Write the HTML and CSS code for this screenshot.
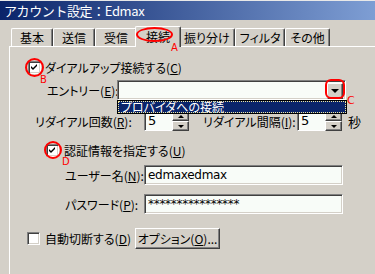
FILE: index.html
```html
<!DOCTYPE html>
<html lang="ja">
<head>
    <meta charset="UTF-8">
    <title>アカウント設定</title>
    <link rel="stylesheet" href="styles.css">
</head>
<body>
    <div class="window">
        <div class="titlebar">アカウント設定：Edmax</div>

        <div class="tabs">
            <div class="tab">基本</div>
            <div class="tab">送信</div>
            <div class="tab">受信</div>
            <div class="tab active">接続</div>
            <div class="tab">振り分け</div>
            <div class="tab">フィルタ</div>
            <div class="tab">その他</div>
        </div>

        <div class="panel">
            <div class="row row-dialup">
                <span class="check"><svg width="7" height="7" viewBox="0 0 7 7"><path d="M0 2 L2 4 L6 0 L6 2 L2 6 L0 4 Z" fill="#000"/></svg></span>
                <span class="label">ダイアルアップ接続する(<u>C</u>)</span>
            </div>

            <div class="row row-entry">
                <span class="label">エントリー(<u>E</u>):</span>
                <div class="combo">
                    <div class="combo-btn"><span class="arrow-down"></span></div>
                </div>
            </div>

            <div class="row row-redial">
                <span class="label label-count">リダイアル回数(<u>R</u>):</span>
                <div class="spin">
                    <div class="spin-input">5</div>
                    <div class="spin-btns">
                        <div class="spin-btn"><span class="arrow-up"></span></div>
                        <div class="spin-btn"><span class="arrow-down small"></span></div>
                    </div>
                </div>
                <span class="label label-interval">リダイアル間隔(<u>I</u>):</span>
                <div class="spin">
                    <div class="spin-input">5</div>
                    <div class="spin-btns">
                        <div class="spin-btn"><span class="arrow-up"></span></div>
                        <div class="spin-btn"><span class="arrow-down small"></span></div>
                    </div>
                </div>
                <span class="label label-sec">秒</span>
            </div>

            <div class="row row-auth">
                <span class="check"><svg width="7" height="7" viewBox="0 0 7 7"><path d="M0 2 L2 4 L6 0 L6 2 L2 6 L0 4 Z" fill="#000"/></svg></span>
                <span class="label">認証情報を指定する(<u>U</u>)</span>
            </div>

            <div class="row row-field">
                <span class="label field-label">ユーザー名(<u>N</u>):</span>
                <div class="textbox">edmaxedmax</div>
            </div>

            <div class="row row-field row-pass">
                <span class="label field-label">パスワード(<u>P</u>):</span>
                <div class="textbox">****************</div>
            </div>

            <div class="row row-auto">
                <span class="check"></span>
                <span class="label">自動切断する(<u>D</u>)</span>
                <div class="button">オプション(<u>O</u>)...</div>
            </div>

            <!-- open dropdown list of the entry combo -->
            <div class="droplist">
                <div class="drop-item">プロバイダへの接続</div>
            </div>
        </div>

        <!-- red annotations -->
        <div class="mark mark-tab"></div>
        <div class="mark-letter letter-a">A</div>
        <div class="mark mark-b"></div>
        <div class="mark-letter letter-b">B</div>
        <div class="mark mark-c"></div>
        <div class="mark-letter letter-c">C</div>
        <div class="mark mark-d"></div>
        <div class="mark-letter letter-d">D</div>
    </div>
</body>
</html>
```

FILE: styles.css
```css
body {
    margin: 0;
    background-color: #d4d0c8;
    font-family: "Noto Sans CJK JP", "DejaVu Sans", sans-serif;
    font-size: 12px;
    font-feature-settings: "palt";
    color: #000;
}

.window {
    position: relative;
    width: 375px;
    height: 274px;
    overflow: hidden;
}

.titlebar {
    height: 20px;
    line-height: 19px;
    padding-left: 4px;
    color: #fff;
    font-size: 13px;
    font-feature-settings: normal;
    letter-spacing: -0.4px;
    background: linear-gradient(to right, #0a246a, #7e9ed4);
    border-top: 1px solid #e8e8e8;
    box-sizing: border-box;
}

/* tabs */
.tabs {
    display: flex;
    align-items: flex-end;
    height: 20px;
    margin-top: 6px;
    padding-left: 11px;
    position: relative;
    z-index: 2;
}

.tab {
    min-width: 42px;
    height: 18px;
    line-height: 17px;
    padding: 0 4px;
    text-align: center;
    border-top: 1px solid #fff;
    border-left: 1px solid #fff;
    border-right: 1px solid #404040;
    border-radius: 2px 2px 0 0;
    box-shadow: inset -1px 0 0 #808080;
    background-color: #d4d0c8;
    box-sizing: border-box;
}

.tab.active {
    min-width: 46px;
    height: 21px;
    line-height: 20px;
    margin: 0 -2px -1px -2px;
    padding: 0 6px;
    position: relative;
    z-index: 3;
}

.panel {
    position: relative;
    margin-left: 9px;
    height: 228px;
    border-top: 1px solid #fff;
    border-left: 1px solid #fff;
    display: flex;
    flex-direction: column;
}

.row {
    display: flex;
    align-items: center;
}

.label {
    flex: none;
    white-space: nowrap;
}

/* checkbox */
.check {
    width: 13px;
    height: 13px;
    box-sizing: border-box;
    border-top: 1px solid #808080;
    border-left: 1px solid #808080;
    border-right: 1px solid #fff;
    border-bottom: 1px solid #fff;
    box-shadow: inset 1px 1px 0 #404040, inset -1px -1px 0 #d4d0c8;
    background-color: #fff;
    display: flex;
    align-items: center;
    justify-content: center;
    margin-right: 4px;
    flex: none;
}

.row-dialup {
    margin-top: 14px;
    padding-left: 18px;
    height: 13px;
}

.row-entry {
    margin-top: 6px;
    padding-left: 37px;
    height: 20px;
}

.row-entry .label {
    width: 70px;
}

.combo {
    width: 229px;
    height: 20px;
    box-sizing: border-box;
    border-top: 1px solid #808080;
    border-left: 1px solid #808080;
    border-right: 1px solid #fff;
    border-bottom: 1px solid #fff;
    box-shadow: inset 1px 1px 0 #404040, inset -1px -1px 0 #d4d0c8;
    background-color: #f8fcf8;
    display: flex;
    justify-content: flex-end;
    padding: 2px;
}

.combo-btn,
.spin-btn,
.button {
    background-color: #d4d0c8;
    border-top: 1px solid #fff;
    border-left: 1px solid #fff;
    border-right: 1px solid #404040;
    border-bottom: 1px solid #404040;
    box-shadow: inset -1px -1px 0 #808080;
    box-sizing: border-box;
    display: flex;
    align-items: center;
    justify-content: center;
}

.combo-btn {
    width: 16px;
    height: 16px;
}

.arrow-down {
    width: 0;
    height: 0;
    border-left: 4px solid transparent;
    border-right: 4px solid transparent;
    border-top: 4px solid #000;
}

.arrow-up {
    width: 0;
    height: 0;
    border-left: 3px solid transparent;
    border-right: 3px solid transparent;
    border-bottom: 3px solid #000;
}

.arrow-down.small {
    border-left-width: 3px;
    border-right-width: 3px;
    border-top-width: 3px;
}

.row-redial {
    margin-top: 11px;
    padding-left: 25px;
    height: 20px;
}

.label-count {
    width: 109px;
}

.spin {
    display: flex;
    height: 20px;
    flex: none;
}

.spin-input {
    width: 28px;
    height: 20px;
    box-sizing: border-box;
    border-top: 1px solid #808080;
    border-left: 1px solid #808080;
    border-bottom: 1px solid #fff;
    box-shadow: inset 1px 1px 0 #404040;
    background-color: #f8fcf8;
    padding-left: 3px;
    line-height: 17px;
    font-family: "DejaVu Sans", sans-serif;
    font-size: 13px;
}

.spin-btns {
    display: flex;
    flex-direction: column;
    width: 17px;
}

.spin-btn {
    height: 10px;
}

.label-interval {
    width: 94px;
    margin-left: 14px;
}

.label-sec {
    margin-left: 6px;
    font-size: 13px;
}

.row-auth {
    margin-top: 13px;
    padding-left: 36px;
    height: 13px;
}

.row-auth .check {
    margin-right: 5px;
}

.row-field {
    margin-top: 8px;
    padding-left: 55px;
    height: 20px;
}

.row-pass {
    margin-top: 9px;
}

.field-label {
    width: 79px;
}

.textbox {
    width: 199px;
    height: 20px;
    box-sizing: border-box;
    border-top: 1px solid #808080;
    border-left: 1px solid #808080;
    border-right: 1px solid #fff;
    border-bottom: 1px solid #fff;
    box-shadow: inset 1px 1px 0 #404040, inset -1px -1px 0 #d4d0c8;
    background-color: #f8fcf8;
    padding-left: 3px;
    line-height: 18px;
    font-family: "DejaVu Sans", sans-serif;
    font-size: 12px;
    letter-spacing: -0.3px;
}

.row-auto {
    margin-top: 14px;
    padding-left: 17px;
    height: 21px;
}

.row-auto .check {
    margin-right: 5px;
}

.button {
    width: 85px;
    height: 21px;
    margin-left: 4px;
    white-space: nowrap;
}

/* dropdown list open over the panel */
.droplist {
    position: absolute;
    left: 107px;
    top: 53px;
    width: 230px;
    height: 14px;
    box-sizing: border-box;
    background-color: #0a246a;
    border: 1px solid #000;
}

.drop-item {
    height: 12px;
    line-height: 11px;
    color: #fff;
    padding-left: 3px;
    outline: 1px dotted #f0e8a0;
    outline-offset: -1px;
    white-space: nowrap;
}

/* annotations */
.mark {
    position: absolute;
    border: 2px solid #f00;
    border-radius: 50%;
    box-sizing: border-box;
    z-index: 5;
}

.mark-tab {
    left: 136px;
    top: 27px;
    width: 37px;
    height: 15px;
}

.mark-b {
    left: 25px;
    top: 58px;
    width: 19px;
    height: 19px;
}

.mark-c {
    left: 325px;
    top: 79px;
    width: 20px;
    height: 20px;
    border-radius: 6px;
}

.mark-d {
    left: 44px;
    top: 141px;
    width: 18px;
    height: 18px;
}

.mark-letter {
    position: absolute;
    color: #f00;
    font-family: "DejaVu Sans", sans-serif;
    font-size: 10px;
    line-height: 10px;
    z-index: 5;
}

.letter-a {
    left: 171px;
    top: 43px;
}

.letter-b {
    left: 40px;
    top: 75px;
}

.letter-c {
    left: 347px;
    top: 96px;
    font-size: 11px;
}

.letter-d {
    left: 62px;
    top: 157px;
}
```
